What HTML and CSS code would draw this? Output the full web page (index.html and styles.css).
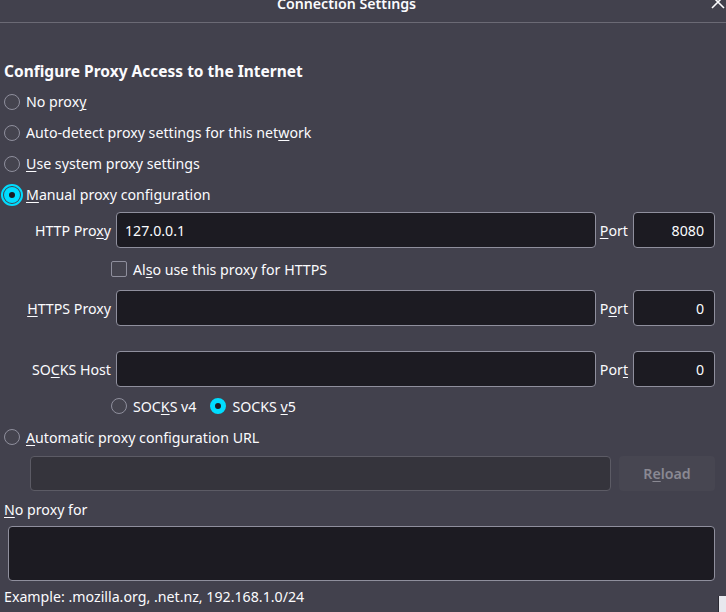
FILE: index.html
```html
<!DOCTYPE html>
<html>
<head>
<meta charset="utf-8">
<link rel="stylesheet" href="styles.css">
</head>
<body>
<div class="dialog">
  <header class="titlebar">
    <div class="title">Connection Settings</div>
    <div class="close">
      <svg width="14" height="14" viewBox="0 0 14 14"><path d="M1 1 L13 13 M13 1 L1 13" stroke="#fbfbfe" stroke-width="1.6" fill="none"/></svg>
    </div>
  </header>
  <main class="content">
    <h1 class="heading">Configure Proxy Access to the Internet</h1>
    <label class="radio-row top"><span class="radio"></span><span>No prox<u>y</u></span></label>
    <label class="radio-row"><span class="radio"></span><span>Auto-detect proxy settings for this net<u>w</u>ork</span></label>
    <label class="radio-row"><span class="radio"></span><span><u>U</u>se system proxy settings</span></label>
    <label class="radio-row"><span class="radio checked focused"></span><span><u>M</u>anual proxy configuration</span></label>

    <div class="proxy-row first">
      <span class="plabel">HTTP Pro<u>x</u>y</span>
      <div class="input host">127.0.0.1</div>
      <span class="portlabel"><u>P</u>ort</span>
      <div class="input port">8080</div>
    </div>
    <div class="check-row">
      <span class="checkbox"></span><span>Al<u>s</u>o use this proxy for HTTPS</span>
    </div>
    <div class="proxy-row">
      <span class="plabel"><u>H</u>TTPS Proxy</span>
      <div class="input host"></div>
      <span class="portlabel">P<u>o</u>rt</span>
      <div class="input port">0</div>
    </div>
    <div class="proxy-row socks">
      <span class="plabel">SO<u>C</u>KS Host</span>
      <div class="input host"></div>
      <span class="portlabel">Por<u>t</u></span>
      <div class="input port">0</div>
    </div>
    <div class="socks-row">
      <label class="inline-radio"><span class="radio"></span><span>SOC<u>K</u>S v4</span></label>
      <label class="inline-radio"><span class="radio checked"></span><span>SOCKS <u>v</u>5</span></label>
    </div>
    <label class="radio-row auto"><span class="radio"></span><span><u>A</u>utomatic proxy configuration URL</span></label>
    <div class="url-row">
      <div class="input url"></div>
      <div class="reload"><span>R<u>e</u>load</span></div>
    </div>
    <div class="noproxy-label"><u>N</u>o proxy for</div>
    <div class="textarea"></div>
    <div class="example-row">
      <span class="example">Example: .mozilla.org, .net.nz, 192.168.1.0/24</span>
      <span class="edge-button"></span>
    </div>
  </main>
</div>
</body>
</html>
```
FILE: styles.css
```css
html, body {
  margin: 0;
  padding: 0;
  background: #42414d;
  overflow: hidden;
}
body {
  width: 726px;
  height: 612px;
  font-family: "Noto Sans", "Open Sans", sans-serif;
  font-size: 14.2px;
  color: #fbfbfe;
}
u {
  text-decoration: underline;
  text-underline-offset: 2px;
  text-decoration-thickness: 1px;
}
.titlebar {
  display: flex;
  height: 22px;
  border-bottom: 1px solid #6b6a75;
}
.title {
  flex: 1;
  text-align: center;
  font-weight: 600;
  font-size: 14.2px;
  line-height: 20px;
  margin-top: -6px;
  height: 20px;
}
.close {
  width: 32px;
  display: flex;
  justify-content: flex-end;
  margin-top: -5px;
  padding-right: 1px;
}
.content {
  padding-left: 4px;
  padding-right: 11px;
}
.heading {
  margin: 36px 0 0 0;
  font-size: 15.5px;
  font-weight: 700;
  line-height: 24px;
  height: 24px;
}
.radio-row {
  display: flex;
  align-items: center;
  height: 31px;
  gap: 6px;
}
.radio-row.top { margin-top: 3px; }
.radio {
  box-sizing: border-box;
  width: 16px;
  height: 16px;
  border-radius: 50%;
  border: 1px solid #8f8f9d;
  background: #45444f;
  flex: none;
}
.radio.checked {
  border: 5px solid #00ddff;
  background: #1c1b22;
}
.radio.focused {
  outline: 2px solid #00ddff;
  outline-offset: 1px;
}
.proxy-row {
  display: flex;
  align-items: center;
  height: 36px;
}
.proxy-row.first { margin-top: 2px; }
.proxy-row.socks { margin-top: 25px; }
.plabel {
  width: 107px;
  text-align: right;
  margin-right: 5px;
}
.input {
  box-sizing: border-box;
  height: 36px;
  border: 1px solid #8f8f9d;
  border-radius: 4px;
  background: #1c1b22;
  display: flex;
  align-items: center;
  padding: 0 8px;
}
.host { flex: 1; }
.portlabel {
  margin: 0 5px 0 4px;
}
.port {
  width: 82px;
  justify-content: flex-end;
  padding-right: 10px;
}
.check-row {
  display: flex;
  align-items: center;
  height: 42px;
  padding-left: 107px;
  gap: 6px;
}
.checkbox {
  box-sizing: border-box;
  width: 16px;
  height: 16px;
  border: 1px solid #8f8f9d;
  border-radius: 2px;
  background: #45444f;
}
.socks-row {
  display: flex;
  align-items: center;
  height: 38px;
  padding-left: 107px;
  gap: 14px;
}
.inline-radio {
  display: flex;
  align-items: center;
  gap: 6px;
}
.radio-row.auto {
  height: 24px;
  margin-top: 0;
}
.url-row {
  display: flex;
  margin-top: 7px;
  height: 35px;
  padding-left: 26px;
  gap: 8px;
}
.url {
  flex: 1;
  height: 35px;
  background: #35343c;
  border-color: #5c5b65;
}
.reload {
  box-sizing: border-box;
  width: 96px;
  height: 35px;
  border-radius: 4px;
  background: #474651;
  color: #8a8993;
  font-weight: 600;
  display: flex;
  align-items: center;
  justify-content: center;
}
.noproxy-label {
  height: 30px;
  margin-top: 5px;
  line-height: 28px;
}
.textarea {
  box-sizing: border-box;
  margin-left: 4px;
  height: 55px;
  border: 1px solid #8f8f9d;
  border-radius: 4px;
  background: #1c1b22;
}
.example-row {
  display: flex;
  justify-content: space-between;
  align-items: flex-start;
  height: 31px;
  margin-right: -11px;
}
.example {
  line-height: 32px;
}
.edge-button {
  box-sizing: border-box;
  width: 8px;
  height: 20px;
  margin-top: 15px;
  background: #e8e8ee;
  border-left: 1px solid #2b2a33;
}
```
